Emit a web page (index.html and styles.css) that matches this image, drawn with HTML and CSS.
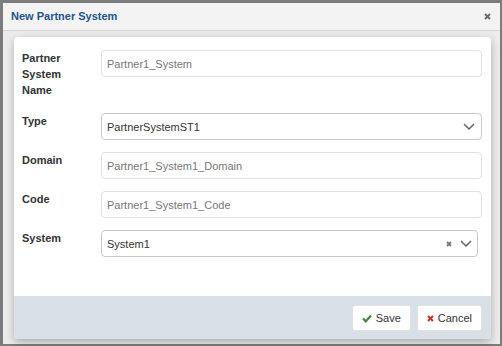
FILE: index.html
```html
<!DOCTYPE html>
<html lang="en">
  <head>
    <meta charset="utf-8" />
    <title>New Partner System</title>
    <link rel="stylesheet" href="styles.css">
  </head>
  <body>
    <div class="modal">
      <div class="modal-header">
        <span class="modal-title">New Partner System</span>
        <svg class="close" width="7" height="7" viewBox="0 0 7 7"><path d="M1 1L6 6M6 1L1 6"/></svg>
      </div>
      <div class="modal-body">
        <div class="card">
          <div class="form">
            <label class="label">Partner System Name</label>
            <input class="input" type="text" value="Partner1_System">

            <label class="label">Type</label>
            <div class="select">
              <span class="select-value">PartnerSystemST1</span>
              <svg class="chevron" width="12" height="7" viewBox="0 0 12 7"><path d="M1 1L6 6L11 1"/></svg>
            </div>

            <label class="label">Domain</label>
            <input class="input" type="text" value="Partner1_System1_Domain">

            <label class="label">Code</label>
            <input class="input" type="text" value="Partner1_System1_Code">

            <label class="label">System</label>
            <div class="select select-clear">
              <span class="select-value">System1</span>
              <svg class="clear" width="6" height="6" viewBox="0 0 6 6"><path d="M1 1L5 5M5 1L1 5"/></svg>
              <svg class="chevron" width="12" height="7" viewBox="0 0 12 7"><path d="M1 1L6 6L11 1"/></svg>
            </div>
          </div>
          <div class="card-footer">
            <button class="button">
              <svg class="icon-ok" width="10" height="9" viewBox="0 0 10 9"><path d="M1 4.5L3.8 7.3L9 1.5"/></svg>
              Save
            </button>
            <button class="button">
              <svg class="icon-cancel" width="7" height="7" viewBox="0 0 7 7"><path d="M1 1L6 6M6 1L1 6"/></svg>
              Cancel
            </button>
          </div>
        </div>
      </div>
    </div>
  </body>
</html>
```

FILE: styles.css
```css
*,:after,:before{box-sizing:border-box}
body{
  margin:0;
  height:346px;
  padding:3px 2px 2px 3px;
  background:#7c7c7c;
  color:#333;
  font:11px 'Liberation Sans',Arial,sans-serif;
}

.modal{
  height:100%;
  display:flex;
  flex-direction:column;
  background:#ececec;
}
.modal-header{
  height:28px;
  flex:none;
  display:flex;
  align-items:center;
  justify-content:space-between;
  padding:0 9px 1px 8px;
  background:#f3f3f3;
  border-bottom:1px solid #d6d6d6;
}
.modal-title{
  color:#22548f;
  font-weight:bold;
}
.close path{
  stroke:#6c6c6c;
  stroke-width:2;
  fill:none;
}

.modal-body{
  flex:1;
  display:flex;
  padding:6px 9px 5px 11px;
}
.card{
  flex:1;
  display:flex;
  flex-direction:column;
  background:#fff;
  border-radius:4px;
  overflow:hidden;
  box-shadow:0 3px 8px rgba(0,0,0,.28);
}

.form{
  flex:1;
  display:grid;
  grid-template-columns:70px 1fr;
  column-gap:9px;
  row-gap:12px;
  align-content:start;
  align-items:start;
  padding:13px 9px 0 8px;
}
.label{
  font-weight:bold;
  line-height:16px;
  margin-bottom:3px;
}
.input,
.select{
  height:27px;
  width:100%;
  border:1px solid #e0e0e0;
  border-radius:4px;
  padding:0 5px;
  font:inherit;
  color:#777;
  background:#fff;
  outline:none;
}
.select{
  display:flex;
  align-items:center;
  border-color:#c8c8c8;
  color:#333;
  padding-right:6px;
}
.select-value{flex:1}
.select-clear{
  width:auto;
  margin-right:4px;
  padding-right:5px;
}
.chevron path{
  stroke:#666;
  stroke-width:1.5;
  fill:none;
}
.clear{margin-right:8px}
.clear path{
  stroke:#777;
  stroke-width:1.8;
  fill:none;
}

.card-footer{
  height:43px;
  flex:none;
  display:flex;
  align-items:center;
  justify-content:flex-end;
  gap:6px;
  padding:1px 9px 0;
  background:#d9dfe6;
}
.button{
  height:26px;
  display:flex;
  align-items:center;
  gap:4px;
  padding:0 9px;
  background:#fff;
  border:1px solid #e2e2e2;
  border-radius:3px;
  font:inherit;
  font-size:11px;
  color:#333;
}
.icon-ok path{
  stroke:#3d8b3d;
  stroke-width:2.2;
  fill:none;
}
.icon-cancel path{
  stroke:#c9302c;
  stroke-width:2;
  fill:none;
}
```
